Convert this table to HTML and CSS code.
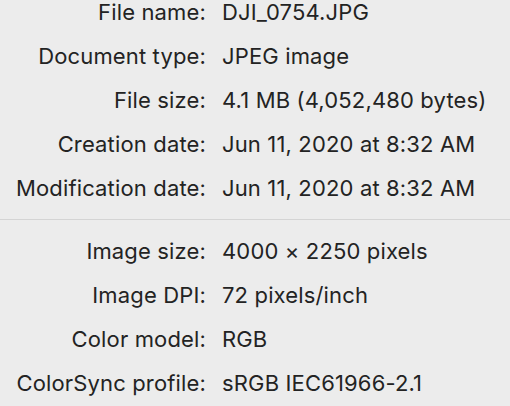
FILE: index.html
```html
<!DOCTYPE html>
<html lang="en">
<head>
  <meta charset="UTF-8" />
  <title>Info</title>
  <link rel="stylesheet" href="styles.css">
</head>
<body>
  <div class="panel">
    <dl class="info-group">
      <dt>File name:</dt><dd>DJI_0754.JPG</dd>
      <dt>Document type:</dt><dd>JPEG image</dd>
      <dt>File size:</dt><dd>4.1 MB (4,052,480 bytes)</dd>
      <dt>Creation date:</dt><dd>Jun 11, 2020 at 8:32 AM</dd>
      <dt>Modification date:</dt><dd>Jun 11, 2020 at 8:32 AM</dd>
    </dl>
    <hr class="divider">
    <dl class="info-group">
      <dt>Image size:</dt><dd>4000 × 2250 pixels</dd>
      <dt>Image DPI:</dt><dd>72 pixels/inch</dd>
      <dt>Color model:</dt><dd>RGB</dd>
      <dt>ColorSync profile:</dt><dd>sRGB IEC61966-2.1</dd>
    </dl>
  </div>
</body>
</html>
```

FILE: styles.css
```css
html, body {
  margin: 0;
  padding: 0;
  height: 100%;
  overflow: hidden;
}

body {
  background-color: #ececec;
  color: #232323;
  font-family: 'Inter', sans-serif;
  font-size: 22px;
  letter-spacing: 0.15px;
}

.panel {
  margin-top: -10px;
}

.info-group {
  display: grid;
  grid-template-columns: 206px 1fr;
  column-gap: 16px;
  margin: 0;
  line-height: 44px;
}

.info-group dt {
  text-align: right;
  white-space: nowrap;
}

.info-group dd {
  margin: 0;
  white-space: nowrap;
}

.divider {
  border: none;
  border-top: 1px solid #d4d4d4;
  margin: 9px 0;
}
```
